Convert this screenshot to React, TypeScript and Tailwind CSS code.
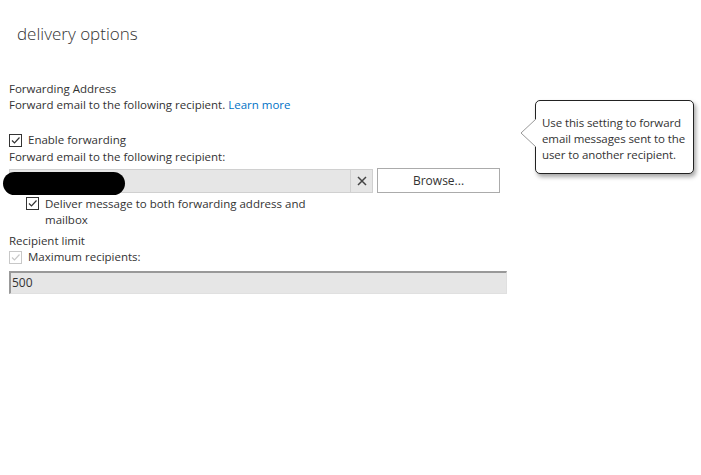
import React from "react";

function Check({ disabled = false }: { disabled?: boolean }) {
  return (
    <span
      className={
        "inline-flex w-[13px] h-[13px] shrink-0 items-center justify-center border bg-white " +
        (disabled ? "border-[#c8c8c8]" : "border-[#333333]")
      }
    >
      <svg width="11" height="11" viewBox="0 0 11 11">
        <path
          d="M2 5.5 L4.5 8 L9.5 2.5"
          fill="none"
          stroke={disabled ? "#c8c8c8" : "#333333"}
          strokeWidth="1.2"
        />
      </svg>
    </span>
  );
}

export default function App() {
  return (
    <div
      className="relative w-[701px] h-[475px] bg-white text-[#333333] overflow-hidden"
      style={{ fontFamily: '"Open Sans", "Noto Sans", sans-serif' }}
    >
      <div className="pt-[22px] pl-[17px] text-[17px] leading-[24px] font-light text-[#333333]">
        delivery options
      </div>

      <div className="pl-[9px] pt-[35px] text-[11.5px] leading-[16px]">
        <div>Forwarding Address</div>
        <div>
          Forward email to the following recipient.{" "}
          <span className="text-[#0072c6]">Learn more</span>
        </div>

        <div className="mt-[19px] flex items-center gap-[6px] h-[16px]">
          <Check />
          <span>Enable forwarding</span>
        </div>
        <div className="mt-[1px]">Forward email to the following recipient:</div>

        <div className="mt-[4px] flex items-start">
          <div className="flex w-[364px] h-[24px] border border-[#d0d0d0] bg-[#e6e6e6]">
            <div className="flex-1" />
            <div className="w-[22px] border-l border-[#d0d0d0] flex items-center justify-center">
              <svg width="10" height="10" viewBox="0 0 10 10">
                <path d="M1 1 L9 9 M9 1 L1 9" stroke="#444" strokeWidth="1.5" />
              </svg>
            </div>
          </div>
          <button className="ml-[4px] -mt-[1px] w-[123px] h-[25px] border border-[#ababab] bg-white text-[12px] text-[#333] flex items-center justify-center">
            Browse...
          </button>
        </div>

        <div className="mt-[3px] pl-[17px] flex items-start gap-[6px] w-[320px]">
          <span className="mt-[1px]">
            <Check />
          </span>
          <span>Deliver message to both forwarding address and mailbox</span>
        </div>

        <div className="mt-[5px]">Recipient limit</div>
        <div className="flex items-center gap-[6px] h-[16px] text-[#333]">
          <Check disabled />
          <span>Maximum recipients:</span>
        </div>
        <div className="mt-[6px] w-[498px] h-[23px] bg-[#e6e6e6] border-t-2 border-l-2 border-[#999999] border-r border-b border-r-[#e0e0e0] border-b-[#e0e0e0] flex items-center pl-[1px] text-[12px]">
          500
        </div>
      </div>

      {/* redaction blob */}
      <div className="absolute left-[3px] top-[172px] w-[122px] h-[23px] bg-black rounded-[12px]" />

      {/* tooltip */}
      <div className="absolute left-[520px] top-[100px]">
        <div className="relative ml-[15px] w-[159px] h-[74px] bg-white border border-[#222] rounded-[5px] shadow-[2px_3px_4px_rgba(0,0,0,0.35)] pl-[6px] pt-[14px] text-[11.5px] leading-[16px] text-[#333] whitespace-nowrap tracking-[-0.1px]">
          <div>Use this setting to forward</div>
          <div>email messages sent to the</div>
          <div>user to another recipient.</div>
        </div>
        <svg className="absolute left-[0px] top-[18px]" width="17" height="30" viewBox="0 0 17 30">
          <path d="M16 1 L1 15 L16 29" fill="white" stroke="#999" strokeWidth="1" />
          <rect x="16" y="0" width="2" height="30" fill="white" />
        </svg>
      </div>
    </div>
  );
}
